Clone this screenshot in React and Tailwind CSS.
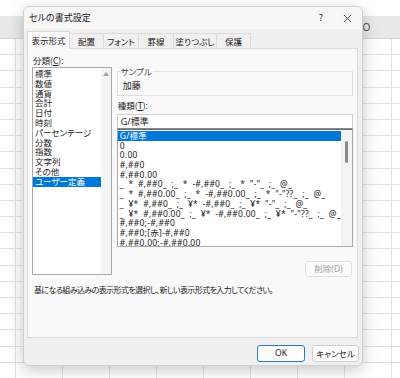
import React from "react";

const jp = "[font-family:'Noto_Sans_CJK_JP',sans-serif] [font-feature-settings:'palt']";
const mix = "[font-family:'Noto_Sans','Noto_Sans_CJK_JP',sans-serif] [font-feature-settings:'palt']";

const categories = [
  "標準", "数値", "通貨", "会計", "日付", "時刻", "パーセンテージ",
  "分数", "指数", "文字列", "その他", "ユーザー定義",
];

const formats = [
  "G/標準",
  "0",
  "0.00",
  "#,##0",
  "#,##0.00",
  '_ * #,##0_ ;_ * -#,##0_ ;_ * "-"_ ;_ @_',
  '_ * #,##0.00_ ;_ * -#,##0.00_ ;_ * "-"??_ ;_ @_',
  '_ ¥* #,##0_ ;_ ¥* -#,##0_ ;_ ¥* "-"_ ;_ @_',
  '_ ¥* #,##0.00_ ;_ ¥* -#,##0.00_ ;_ ¥* "-"??_ ;_ @_',
  "#,##0;-#,##0",
  "#,##0;[赤]-#,##0",
  "#,##0.00;-#,##0.00",
];

const tabs = [
  { label: "表示形式", w: "w-[43px]" },
  { label: "配置", w: "w-[34px]" },
  { label: "フォント", w: "w-[35px]" },
  { label: "罫線", w: "w-[35px]" },
  { label: "塗りつぶし", w: "w-[43px]" },
  { label: "保護", w: "w-[34px]" },
];

const Sheet = () => (
  <div className="absolute inset-0 bg-white">
    <div className="h-[16px]" />
    <div className="h-[23px] bg-[#e9e9e9] border-b border-[#d4d4d4] flex">
      <div className="w-[343px]" />
      <div className={`w-[47px] flex items-center justify-center text-[10px] text-[#555] ${mix}`}>O</div>
    </div>
    {Array.from({ length: 21 }).map((_, i) => (
      <div key={i} className="h-[16.2px] border-b border-[#e1e1e1] flex">
        {Array.from({ length: 9 }).map((_, j) => (
          <div key={j} className={`${j === 0 ? "w-[16px]" : "w-[47px]"} border-r border-[#e1e1e1]`} />
        ))}
      </div>
    ))}
  </div>
);

const Dialog = () => (
  <div className={`absolute left-[23px] top-[6px] w-[340px] h-[360px] rounded-[6px] bg-[#f0f0f0] border border-[#d0d0d0] shadow-[0_4px_16px_rgba(0,0,0,0.22)] overflow-hidden flex flex-col text-[#1b1b1b] ${jp}`}>
    <div className="h-[22px] bg-[#f7f7f7] flex items-center pl-[5px] pr-[8px] shrink-0">
      <span className="text-[9px]">セルの書式設定</span>
      <span className="ml-auto text-[9px] mr-[20px]">?</span>
      <svg width="9" height="9" viewBox="0 0 10 10" className="mr-[2px]">
        <path d="M1 1L9 9M9 1L1 9" stroke="#333" strokeWidth="1" />
      </svg>
    </div>
    <div className="h-[19px] flex items-end pl-[3px] shrink-0">
      {tabs.map((t, i) =>
        i === 0 ? (
          <div key={i} className={`${t.w} h-[18px] bg-[#f9f9f9] border border-b-0 border-[#d9d9d9] flex items-center justify-center text-[8.5px] relative top-[1px] z-10`}>
            {t.label}
          </div>
        ) : (
          <div key={i} className={`${t.w} h-[15px] border-t border-r border-[#dcdcdc] bg-[#f0f0f0] flex items-center justify-center text-[8.5px]`}>
            {t.label}
          </div>
        )
      )}
    </div>
    <div className="mx-[3px] w-[331px] h-[290px] bg-[#f9f9f9] border border-[#dcdcdc] px-[4px] pt-[5px] flex flex-col shrink-0">
      <div className="flex gap-[5px]">
        <div className="w-[80px] flex flex-col">
          <div className="h-[12px] text-[8.5px] leading-[12px] pl-[1px]">
            分類(<span className="underline">C</span>):
          </div>
          <div className="h-[208px] mt-[1px] bg-white border border-[#a8a8a8] flex">
            <div className="flex-1 pt-[1px] text-[8.5px] leading-[9.8px]">
              {categories.map((c, i) => (
                <div key={i} className={`pl-[2px] h-[9.8px] whitespace-nowrap ${i === categories.length - 1 ? "bg-[#0078d7] text-white" : ""}`}>
                  {c}
                </div>
              ))}
            </div>
            <div className="w-[10px] bg-[#f5f5f5] flex justify-center pt-[4px]">
              <svg width="6" height="4" viewBox="0 0 6 4">
                <path d="M0 4L3 0L6 4Z" fill="#a0a0a0" />
              </svg>
            </div>
          </div>
        </div>
        <div className="w-[237px] flex flex-col">
          <div className="relative mt-[17px] h-[25px] border border-[#e0e0e0]">
            <span className="absolute -top-[6px] left-[2px] bg-[#f9f9f9] px-[1px] text-[8.5px] leading-[10px] text-[#444]">サンプル</span>
            <div className="pt-[9px] pl-[5px] text-[9px] leading-[10px]">加藤</div>
          </div>
          <div className="mt-[3px] h-[13px] text-[8.5px] leading-[13px] pl-[1px]">
            種類(<span className="underline">T</span>):
          </div>
          <div className="mt-[2px] h-[15px] bg-white border border-[#d0d0d0] border-b-[#8a8a8a] flex items-center pl-[3px] text-[9px]">
            <span className={mix}>G/標準</span>
          </div>
          <div className="h-[118px] bg-white border border-[#a8a8a8] border-t-[#6a6a6a] flex overflow-hidden">
            <div className={`flex-1 min-w-0 overflow-hidden pt-[1px] text-[8.5px] leading-[9.7px] tracking-[0.25px] [word-spacing:2.2px] ${mix}`}>
              {formats.map((f, i) => (
                <div key={i} className={`pl-[2px] h-[9.7px] whitespace-pre ${i === 0 ? "bg-[#0078d7] text-white" : ""}`}>
                  {f}
                </div>
              ))}
            </div>
            <div className="w-[11px] bg-[#f3f3f3] flex justify-center pt-[11px]">
              <div className="w-[2.5px] h-[22px] rounded-full bg-[#8a8a8a]" />
            </div>
          </div>
          <div className="mt-[14px] flex justify-end">
            <div className="w-[47px] h-[16px] mr-[1px] rounded-[3px] border border-[#e0e0e0] bg-[#fbfbfb] text-[8.5px] text-[#a0a0a0] flex items-center justify-center">
              <span className={mix}>削除(D)</span>
            </div>
          </div>
        </div>
      </div>
      <div className="mt-[8px] pl-[2px] text-[8px] leading-[10px] tracking-[-0.6px] whitespace-nowrap">
        基になる組み込みの表示形式を選択し、新しい表示形式を入力してください。
      </div>
    </div>
    <div className="flex justify-end gap-[7px] pr-[3px] pt-[7px]">
      <div className="w-[48px] h-[17px] rounded-[3px] border border-[#2b78c9] bg-[#fdfdfd] text-[8.5px] flex items-center justify-center">
        <span className={mix}>OK</span>
      </div>
      <div className="w-[47px] h-[17px] rounded-[3px] border border-[#d0d0d0] bg-[#fdfdfd] text-[8.5px] flex items-center justify-center">
        キャンセル
      </div>
    </div>
  </div>
);

export default function App() {
  return (
    <div className="relative w-[400px] h-[378px] overflow-hidden bg-white">
      <Sheet />
      <Dialog />
    </div>
  );
}
